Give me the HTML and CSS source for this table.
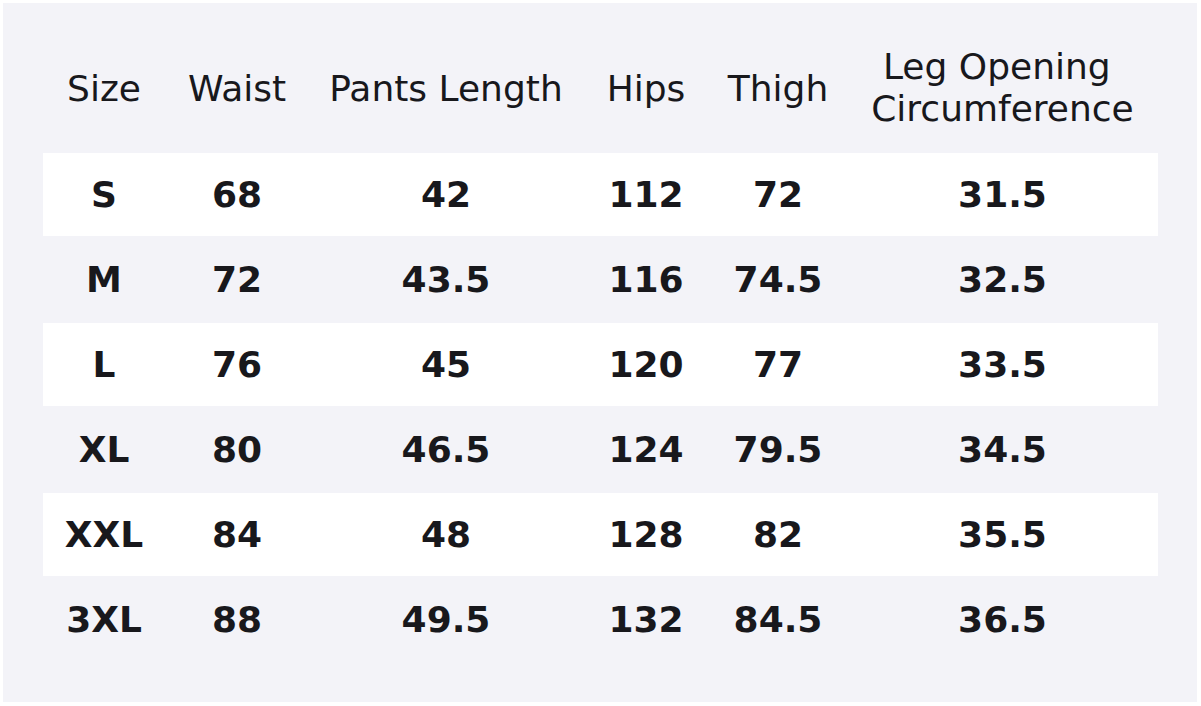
FILE: index.html
```html
<!DOCTYPE html>
<html>
<head>
<meta charset="utf-8">
<link rel="stylesheet" href="styles.css">
</head>
<body>
<div class="panel">
  <div class="table">
    <div class="row head">
      <div>Size</div><div>Waist</div><div>Pants Length</div><div>Hips</div><div>Thigh</div><div class="two">Leg Opening&nbsp;<br>Circumference</div>
    </div>
    <div class="row light"><div>S</div><div>68</div><div>42</div><div>112</div><div>72</div><div>31.5</div></div>
    <div class="row dark"><div>M</div><div>72</div><div>43.5</div><div>116</div><div>74.5</div><div>32.5</div></div>
    <div class="row light"><div>L</div><div>76</div><div>45</div><div>120</div><div>77</div><div>33.5</div></div>
    <div class="row dark"><div>XL</div><div>80</div><div>46.5</div><div>124</div><div>79.5</div><div>34.5</div></div>
    <div class="row light"><div>XXL</div><div>84</div><div>48</div><div>128</div><div>82</div><div>35.5</div></div>
    <div class="row dark"><div>3XL</div><div>88</div><div>49.5</div><div>132</div><div>84.5</div><div>36.5</div></div>
  </div>
</div>
</body>
</html>
```
FILE: styles.css
```css
html, body {
  margin: 0;
  padding: 0;
  background: #ffffff;
}
body {
  padding: 3px;
  font-family: "DejaVu Sans", "Liberation Sans", sans-serif;
  color: #18181c;
}
.panel {
  width: 1194px;
  height: 699px;
  box-sizing: border-box;
  background: #f3f3f8;
  padding: 20px 0 0 40px;
}
.table {
  width: 1115px;
  display: flex;
  flex-direction: column;
}
.row {
  display: grid;
  grid-template-columns: 122px 144px 274px 126px 138px 311px;
  align-items: center;
  text-align: center;
  font-size: 36px;
}
.head {
  height: 130px;
  font-weight: normal;
}
.head .two {
  line-height: 42px;
}
.light {
  height: 83px;
  background: #ffffff;
  font-weight: bold;
}
.dark {
  height: 87px;
  font-weight: bold;
}
```
